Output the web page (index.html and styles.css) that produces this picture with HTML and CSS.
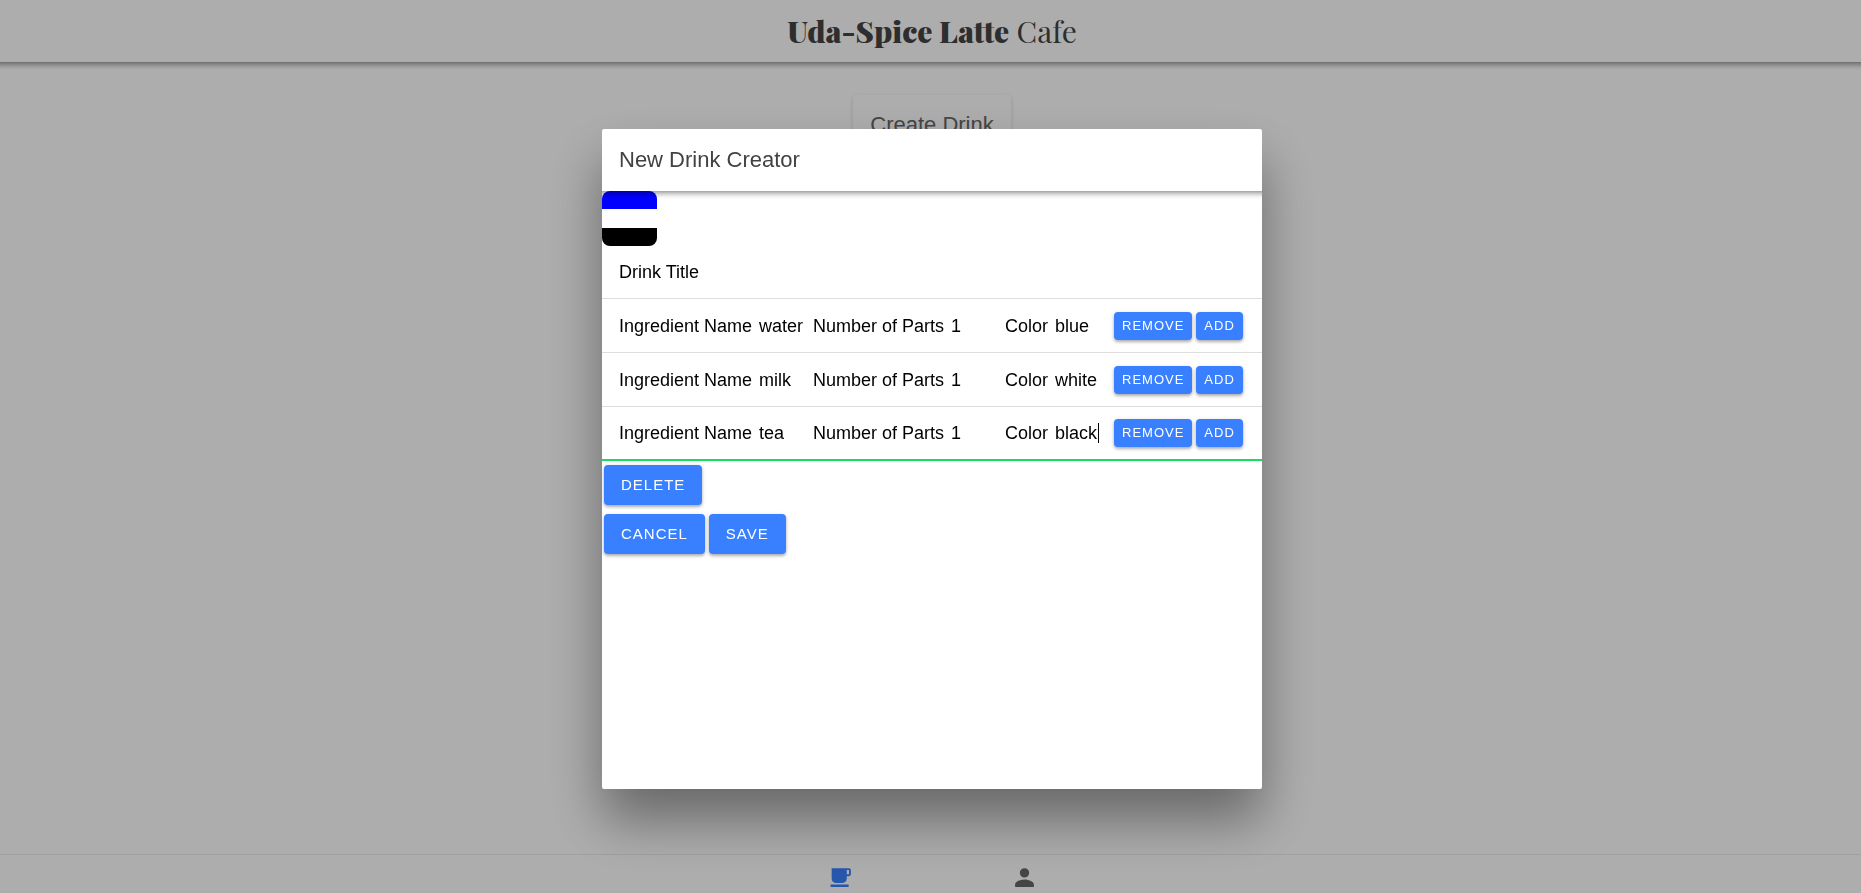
FILE: index.html
```html
<!DOCTYPE html>
<html lang="en">
<head>
<meta charset="utf-8">
<title>Uda-Spice Latte Cafe</title>
<link rel="stylesheet" href="styles.css">
</head>
<body>
<div class="app">
  <header class="app-header"><h1 class="brand"><strong>Uda-Spice Latte</strong> Cafe</h1></header>
  <main class="content"><button class="create-card" type="button">Create Drink</button></main>
  <nav class="tab-bar" aria-label="Main">
    <a class="tab tab-active" href="#menu" aria-label="Drinks">
      <svg class="tab-icon" viewBox="0 0 24 24"><path fill-rule="evenodd" d="M3.500 3H20c1.300 0 2 .8 2 2v3.500c0 1.300-.8 2.200-2 2.200h-2V13c0 2.400-1.600 4.200-4 4.200H7.500c-2.400 0-4-1.800-4-4.200zM18 4.900v4h2.200v-4zM2.500 18.800h17.300V21H2.500z"/></svg>
    </a>
    <a class="tab" href="#user" aria-label="User">
      <svg class="tab-icon" viewBox="0 0 24 24"><path d="M12 12a4.500 4.500 0 1 0 0-9 4.500 4.500 0 0 0 0 9zm0 2c-3 0-9 1.500-9 4.700V21h18v-2.300C21 15.500 15 14 12 14z"/></svg>
    </a>
  </nav>
</div>
<div class="overlay">
  <section class="modal" role="dialog" aria-modal="true" aria-labelledby="modal-title">
    <header class="modal-header"><h2 class="modal-title" id="modal-title">New Drink Creator</h2></header>
    <form class="modal-body">
      <div class="glass"><div class="layer layer-blue"></div><div class="layer layer-white"></div><div class="layer layer-black"></div></div>
      <div class="item item-title"><label class="field"><span>Drink Title</span><input class="input" type="text"></label></div>
      <div class="item">
        <label class="field"><span>Ingredient Name</span><input class="input" type="text" value="water"></label>
        <label class="field"><span>Number of Parts</span><input class="input" type="text" value="1"></label>
        <label class="field"><span>Color</span><input class="input" type="text" value="blue"></label>
        <div class="actions"><button class="button button-small" type="button">REMOVE</button><button class="button button-small" type="button">ADD</button></div>
      </div>
      <div class="item">
        <label class="field"><span>Ingredient Name</span><input class="input" type="text" value="milk"></label>
        <label class="field"><span>Number of Parts</span><input class="input" type="text" value="1"></label>
        <label class="field"><span>Color</span><input class="input" type="text" value="white"></label>
        <div class="actions"><button class="button button-small" type="button">REMOVE</button><button class="button button-small" type="button">ADD</button></div>
      </div>
      <div class="item item-focused">
        <label class="field"><span>Ingredient Name</span><input class="input" type="text" value="tea"></label>
        <label class="field"><span>Number of Parts</span><input class="input" type="text" value="1"></label>
        <label class="field"><span>Color</span><span class="caret-field"><input class="input" type="text" value="black"><i class="caret"></i></span></label>
        <div class="actions"><button class="button button-small" type="button">REMOVE</button><button class="button button-small" type="button">ADD</button></div>
      </div>
      <div class="form-actions">
        <div class="button-row"><button class="button" type="button">DELETE</button></div>
        <div class="button-row"><button class="button" type="button">CANCEL</button><button class="button" type="button">SAVE</button></div>
      </div>
    </form>
  </section>
</div>
</body>
</html>
```

FILE: styles.css
```css
* { box-sizing: border-box; }
body {
  margin: 0;
  font-family: "Liberation Sans", Arial, sans-serif;
  color: #000;
  overflow: hidden;
}
h1, h2 { margin: 0; font-weight: 400; }

.app { display: flex; flex-direction: column; height: 100vh; background: #fff; }
.app-header {
  position: relative;
  display: flex; justify-content: center; align-items: center;
  height: 62px; padding-left: 3px;
}
.app-header::after, .modal-header::after {
  content: ""; position: absolute; left: 0; right: 0; top: 100%; height: 8px;
  background: linear-gradient(rgba(0, 0, 0, .36), rgba(0, 0, 0, .18) 35%, rgba(0, 0, 0, .05) 70%, transparent);
}
.brand { font-family: "Playfair Display", "Liberation Serif", serif; font-size: 30px; line-height: 40px; color: #444; }
.brand strong { font-weight: 900; }
.content { flex: 1; display: flex; justify-content: center; align-items: flex-start; padding: 33px 0 0 3px; }
.create-card {
  padding: 17px; border: 0; border-radius: 4px; background: #fff;
  font: 22px/26px "Liberation Sans", Arial, sans-serif; color: #666;
  box-shadow: 0 2px 4px rgba(0, 0, 0, .16);
}
.tab-bar {
  display: flex; justify-content: center;
  height: 39px; padding-left: 3px; border-top: 1px solid #ededed; background: #fff;
}
.tab { width: 184px; padding-top: 10px; text-align: center; color: #666; }
.tab-active { color: #3880ff; }
.tab-icon { width: 25px; height: 25px; fill: currentColor; }

.overlay {
  position: fixed; inset: 0;
  display: flex; justify-content: center; align-items: center;
  padding: 25px 0 0 3px;
  background: rgba(0, 0, 0, .32);
}
.modal {
  width: 660px; max-width: 100%; height: 660px; max-height: 100%;
  overflow: hidden; border-radius: 2px; background: #fff;
  box-shadow: 0 31px 53px rgba(0, 0, 0, .4);
}
.modal-header {
  position: relative;
  display: flex; align-items: center;
  height: 62px; padding: 0 17px;
}
.modal-title { font-size: 22px; line-height: 26px; color: #424242; }

.glass { width: 55px; height: 55px; overflow: hidden; border-radius: 8px; display: flex; flex-direction: column; }
.layer { flex: 1; }
.layer-blue { background: blue; }
.layer-white { background: white; }
.layer-black { background: black; }

.item {
  display: grid; grid-template-columns: 194px 192px 109px 1fr; align-items: center;
  height: 54px; padding-left: 17px; border-bottom: 1px solid #dedede;
}
.item-title { grid-template-columns: 1fr; height: 53px; }
.item-focused { border-bottom: 2px solid #19dd62; }
.field { display: flex; align-items: center; gap: 7px; font-size: 18px; line-height: 22px; white-space: nowrap; }
.input {
  flex: 1; min-width: 0; width: 100%; padding: 0; border: 0; outline: 0; background: none;
  font: inherit; color: inherit;
}
.caret-field { position: relative; flex: 1; display: flex; }
.caret { position: absolute; left: 43px; top: 1px; width: 1px; height: 20px; background: #000; }

.actions, .button-row { display: flex; gap: 4px; }
.button {
  height: 40px; padding: 0 17px; border: 0; border-radius: 4px;
  background: #3880ff; color: #fff;
  font: 15px/18px "Liberation Sans", Arial, sans-serif; letter-spacing: 1px;
  box-shadow: 0 2px 3px rgba(0, 0, 0, .25), 0 1px 5px rgba(0, 0, 0, .12);
}
.button-small { height: 28px; padding: 0 8px; font-size: 13px; }
.form-actions { display: grid; gap: 9px; padding: 4px 2px; }
```
